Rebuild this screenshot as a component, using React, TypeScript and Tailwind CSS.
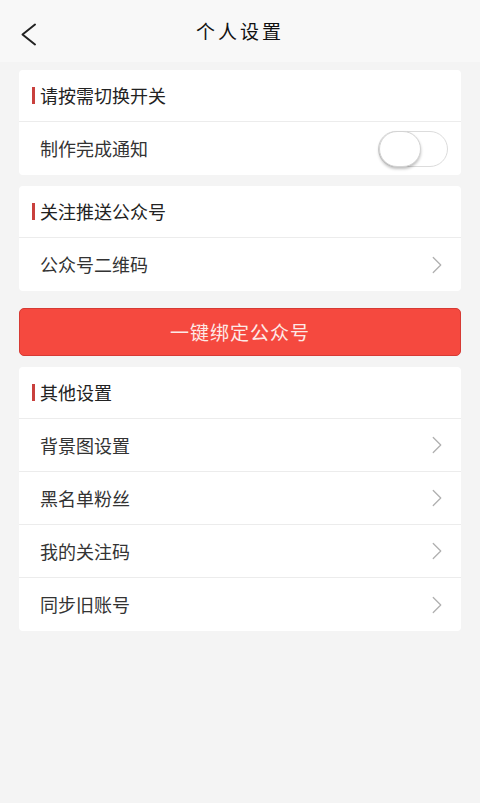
import { ChevronRight } from "lucide-react";

const FONT = { fontFamily: '"Noto Sans CJK SC", "Noto Sans", sans-serif' };

function SectionTitle({ title }: { title: string }) {
  return (
    <div className="flex h-[52px] items-center border-b border-[#ececec] pl-[13px]">
      <span className="mr-[5px] h-[17px] w-[3px] bg-[#c9403d]" />
      <span className="text-[18px] text-[#222]">{title}</span>
    </div>
  );
}

function LinkRow({ label, last }: { label: string; last?: boolean }) {
  return (
    <div
      className={
        "flex h-[53px] items-center justify-between pl-[21px] pr-[9px]" +
        (last ? "" : " border-b border-[#ececec]")
      }
    >
      <span className="text-[18px] text-[#333]">{label}</span>
      <ChevronRight className="h-[30px] w-[30px] text-[#b0b0b0]" strokeWidth={1} />
    </div>
  );
}

export default function App() {
  return (
    <div className="min-h-[803px] w-[480px] bg-[#f4f4f4]" style={FONT}>
      <div className="relative flex h-[62px] items-center justify-center bg-[#f8f8f8]">
        <svg
          className="absolute left-[0px] top-[0px]"
          width="60"
          height="62"
          viewBox="0 0 60 62"
          fill="none"
        >
          <polyline
            points="35,24.5 22.5,34.5 35,44.5"
            stroke="#222"
            strokeWidth="2"
            strokeLinecap="round"
            strokeLinejoin="round"
          />
        </svg>
        <span className="text-[19px] tracking-[3px] text-[#111]">个人设置</span>
      </div>

      <div className="flex flex-col px-[19px] pt-[8px]">
        <div className="rounded-[4px] bg-white">
          <SectionTitle title="请按需切换开关" />
          <div className="flex h-[53px] items-center justify-between pl-[21px] pr-[13px]">
            <span className="text-[18px] text-[#333]">制作完成通知</span>
            <div className="relative h-[36px] w-[70px] rounded-full border border-[#dcdcdc] bg-white">
              <div className="absolute left-[0px] top-[-1px] h-[36px] w-[42px] rounded-full border border-[#d4d4d4] bg-white shadow-[0_2px_3px_rgba(0,0,0,0.25)]" />
            </div>
          </div>
        </div>

        <div className="mt-[11px] rounded-[4px] bg-white">
          <SectionTitle title="关注推送公众号" />
          <LinkRow label="公众号二维码" last />
        </div>

        <button className="mt-[17px] flex h-[48px] items-center justify-center rounded-[5px] border border-[#d63a34] bg-[#f5493f] text-[19px] tracking-[1px] text-[#fde9e7]">
          一键绑定公众号
        </button>

        <div className="mt-[11px] rounded-[4px] bg-white">
          <SectionTitle title="其他设置" />
          <LinkRow label="背景图设置" />
          <LinkRow label="黑名单粉丝" />
          <LinkRow label="我的关注码" />
          <LinkRow label="同步旧账号" last />
        </div>
      </div>
    </div>
  );
}
